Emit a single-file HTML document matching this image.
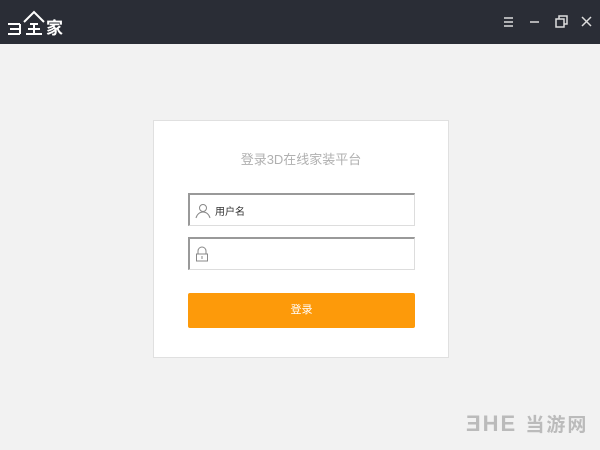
<!DOCTYPE html>
<html><head><meta charset="utf-8"><style>
body{margin:0;width:600px;height:450px;background:#f2f2f2;position:relative;overflow:hidden;font-family:"Liberation Sans","Noto Sans CJK SC",sans-serif}
.top{position:absolute;left:0;top:0;width:600px;height:44px;background:#2a2d36}
.card{position:absolute;left:153px;top:120px;width:296px;height:238px;background:#fff;border:1px solid #e0e0e0;box-sizing:border-box}
.title{position:absolute;left:0;width:100%;top:28px;text-align:center;color:#b0b0b0;font-size:13px}
.inp{position:absolute;left:34px;width:227px;height:33px;box-sizing:border-box;border:1px solid #ddd;border-top:2px solid #999;border-left:2px solid #999}
.btn{position:absolute;left:34px;top:172px;width:227px;height:35px;background:#fd9a0a;border-radius:2px;color:#fff;font-size:11px;text-align:center;line-height:35px}
.wm{position:absolute;left:466px;top:410px;color:#bbb;font-size:22px;font-weight:bold;letter-spacing:2px}
</style></head><body>
<div class="top">
<svg width="70" height="44" style="position:absolute;left:6px;top:0" fill="none" stroke="#fff" stroke-width="2">
<path d="M2 24h12M4 29h10M2 34h12M14 24v10"/>
<path d="M18 22l10-10 10 10M24 24h8M22 29h12M20 34h16M28 24v10"/>
<text x="40" y="34" fill="#fff" stroke="none" font-size="17" font-family="Noto Sans CJK SC" font-weight="bold">家</text>
</svg>
<svg width="100" height="44" style="position:absolute;left:500px;top:0" stroke="#ddd" stroke-width="1.5" fill="none">
<path d="M4 18h9M4 22h9M4 26h9"/>
<path d="M30 22h9"/>
<rect x="56" y="19" width="8" height="8"/><path d="M59 19v-3h8v8h-3"/>
<path d="M82 17l9 9M91 17l-9 9"/>
</svg>
</div>
<div class="card">
<div class="title">登录3D在线家装平台</div>
<div class="inp" style="top:72px">
<svg width="16" height="16" style="position:absolute;left:5px;top:8px" fill="none" stroke="#888" stroke-width="1"><circle cx="8" cy="5" r="3.5"/><path d="M1 15c1-4 4-6 7-6s6 2 7 6"/></svg>
<span style="position:absolute;left:25px;top:8px;font-size:10px;color:#333">用户名</span>
</div>
<div class="inp" style="top:116px">
<svg width="14" height="16" style="position:absolute;left:5px;top:7px" fill="none" stroke="#888" stroke-width="1"><path d="M3 8V5a4 4 0 018 0v3"/><rect x="1.5" y="8" width="11" height="7"/><path d="M7 10v3"/></svg>
</div>
<div class="btn">登录</div>
</div>
<div class="wm">ƎHE <span style="font-size:19px">当游网</span></div>
</body></html>
